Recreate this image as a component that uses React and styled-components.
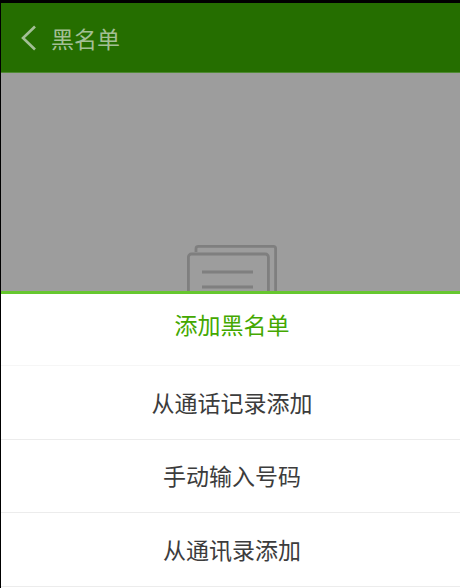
import React from "react";
import styled, { createGlobalStyle } from "styled-components";

const GlobalStyle = createGlobalStyle`
  html, body {
    margin: 0;
    padding: 0;
    background: #000;
  }
  body {
    font-family: "Roboto", "Noto Sans CJK SC", sans-serif;
  }
`;

const Screen = styled.div`
  position: relative;
  width: 460px;
  height: 588px;
  overflow: hidden;
  box-sizing: border-box;
  padding-top: 3px;
  display: flex;
  flex-direction: column;
  background: #000;
`;

const Header = styled.div`
  height: 70px;
  flex-shrink: 0;
  display: flex;
  align-items: center;
  padding-left: 19px;
  gap: 14px;
  background: #256e00;
  border-bottom: 1px solid #4f8a33;
  box-sizing: border-box;
  margin-left: 1px;
`;

const Title = styled.span`
  font-size: 23px;
  line-height: 28px;
  color: #a3bf96;
  font-family: "Noto Sans CJK SC", sans-serif;
`;

const Body = styled.div`
  flex: 1;
  display: flex;
  justify-content: center;
  padding-top: 172px;
  padding-left: 5px;
  margin-left: 1px;
  background: #9d9d9d;
`;

const Sheet = styled.div`
  position: absolute;
  left: 1px;
  right: 0;
  bottom: 0;
  height: 297px;
  box-sizing: border-box;
  display: flex;
  flex-direction: column;
  background: #fff;
  border-top: 3px solid #66c72f;
`;

const Row = styled.div`
  height: ${(p) => p.$height}px;
  box-sizing: border-box;
  flex-shrink: 0;
  display: flex;
  align-items: center;
  justify-content: center;
  padding-left: 3px;
  padding-bottom: ${(p) => (p.$accent ? 12 : 2)}px;
  font-family: "Noto Sans CJK SC", sans-serif;
  font-size: 23px;
  color: ${(p) => (p.$accent ? "#44a800" : "#3c3c3c")};
  border-bottom: 1px solid ${(p) => (p.$accent ? "#f6f6f6" : "#ececec")};
`;

const BackIcon = () => (
  <svg width="17" height="26" viewBox="0 0 17 26" fill="none">
    <path d="M15 1.5 3 13l12 11.5" stroke="#a3bf96" strokeWidth="2.6" />
  </svg>
);

const EmptyIcon = () => (
  <svg width="92" height="120" viewBox="0 0 92 120" fill="none" stroke="#7f7f7f" strokeWidth="2.8">
    <path d="M9 7V3.5Q9 1.4 11.5 1.4H86.5Q88.6 1.4 88.6 3.5V120" />
    <rect x="1.4" y="9" width="80" height="110" rx="3" />
    <path d="M15 27H66M15 42H66" />
  </svg>
);

const App = () => {
  return (
    <Screen>
      <GlobalStyle />
      <Header>
        <BackIcon />
        <Title>黑名单</Title>
      </Header>
      <Body>
        <EmptyIcon />
      </Body>
      <Sheet>
        <Row $accent $height={72}>添加黑名单</Row>
        <Row $height={74}>从通话记录添加</Row>
        <Row $height={73}>手动输入号码</Row>
        <Row $height={74}>从通讯录添加</Row>
      </Sheet>
    </Screen>
  );
};

export default App;
